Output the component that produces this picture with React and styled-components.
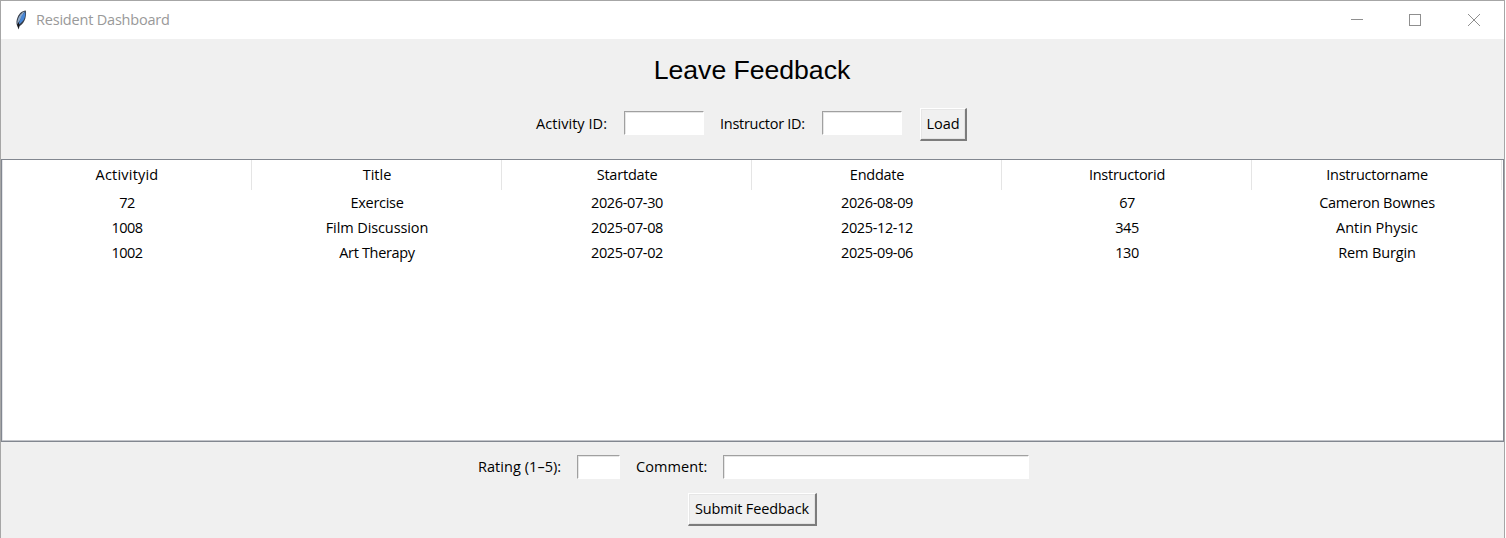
import React from "react";
import styled, { createGlobalStyle } from "styled-components";

const Global = createGlobalStyle`
  * { box-sizing: border-box; }
  html, body { margin: 0; background: #fff; overflow: hidden; }
  body { font-family: "Open Sans", "Noto Sans", sans-serif; font-size: 14.5px; color: #000; }
`;

const Window = styled.div`
  width: 1505px;
  height: 538px;
  border: 1px solid #a6a6a6;
  border-bottom: 0;
  background: #f0f0f0;
  display: flex;
  flex-direction: column;
`;

const TitleBar = styled.header`
  height: 38px;
  flex: none;
  background: #fff;
  display: flex;
  align-items: center;
  padding-left: 12px;
`;

const Feather = styled.svg`
  width: 16px;
  height: 20px;
  flex: none;
`;

const WindowTitle = styled.span`
  margin-left: 7px;
  flex: 1;
  color: #999;
  font-size: 14.5px;
  letter-spacing: -0.2px;
  line-height: 20px;
  white-space: nowrap;
`;

const WindowControls = styled.div`
  display: flex;
  margin-right: -1px;
`;

const ControlIcon = styled.svg`
  width: 58px;
  height: 38px;
  stroke: #8f8f8f;
  fill: none;
  stroke-width: 1;
`;

const Heading = styled.h1`
  margin: 14px 1px 0 0;
  text-align: center;
  font: 400 26.67px/34px "Liberation Sans", Arial, sans-serif;
  letter-spacing: -0.05px;
`;

const FormRow = styled.div`
  display: flex;
  align-items: center;
  flex: none;
  height: ${(p) => p.$height}px;
  margin-top: ${(p) => p.$top}px;
  padding-left: ${(p) => p.$left}px;
`;

const Label = styled.label`
  width: ${(p) => p.$width}px;
  margin-bottom: ${(p) => p.$lift || 0}px;
  line-height: 20px;
  white-space: nowrap;
  letter-spacing: ${(p) => p.$tracking}px;
`;

const Field = styled.input`
  width: ${(p) => p.$width}px;
  height: 24px;
  margin: 0 ${(p) => p.$gap}px ${(p) => p.$lift || 0}px 0;
  padding: 0 3px;
  border: 1px solid;
  border-color: #a0a0a0 #fff #fff #a0a0a0;
  border-radius: 0;
  background: #fff;
  box-shadow: inset 1px 1px #e6e6e6;
  outline: none;
  font: inherit;
`;

const Button = styled.button`
  width: ${(p) => p.$width}px;
  height: 33px;
  padding: 0;
  border: solid;
  border-width: 1px 2px 2px 1px;
  border-color: #fff #7c7c7c #7c7c7c #fff;
  border-radius: 0;
  background: #f0f0f0;
  box-shadow: inset 1px 1px #e6e6e6, inset -1px -1px #e3e3e3;
  color: #000;
  font: inherit;
  line-height: 20px;
  white-space: nowrap;
  letter-spacing: ${(p) => p.$tracking}px;
`;

const TableFrame = styled.section`
  height: 283px;
  flex: none;
  margin-top: 18px;
  border: 1px solid #828790;
  box-shadow: inset 0 -1px #c3c5ca, inset 1px 0 #e3e4e8;
  background: #fff;
`;

const HeaderRow = styled.div`
  display: grid;
  grid-template-columns: repeat(6, 250px);
  height: 30px;
`;

const HeaderCell = styled.div`
  border-right: 1px solid #e5e5e5;
  padding-left: 1px;
  text-align: center;
  line-height: 30px;
  letter-spacing: ${(p) => p.$tracking}px;
`;

const DataRow = styled.div`
  display: grid;
  grid-template-columns: repeat(6, 250px);
  height: 25px;
`;

const DataCell = styled.div`
  text-align: center;
  line-height: 25px;
  white-space: nowrap;
  letter-spacing: ${(p) => p.$tracking}px;
`;

const columns = [
  ["Activityid", 0.2],
  ["Title", 0],
  ["Startdate", -0.2],
  ["Enddate", -0.25],
  ["Instructorid", -0.25],
  ["Instructorname", -0.25],
];

const rows = [
  [["72", -0.5], ["Exercise", -0.29], ["2026-07-30", -0.36], ["2026-08-09", -0.36], ["67", -0.5], ["Cameron Bownes", -0.27]],
  [["1008", -0.5], ["Film Discussion", -0.1], ["2025-07-08", -0.36], ["2025-12-12", -0.36], ["345", -0.5], ["Antin Physic", 0]],
  [["1002", -0.5], ["Art Therapy", -0.33], ["2025-07-02", -0.36], ["2025-09-06", -0.36], ["130", -0.5], ["Rem Burgin", -0.12]],
];

export default function App() {
  return (
    <>
      <Global />
      <Window>
        <TitleBar>
          <Feather viewBox="0 0 16 20">
            <path d="M12.7.5C9 .8 6.200 3.500 4.600 7.200 3.300 10.200 3.200 13 4 15.600L5.700 19.500 6.500 16.300C9.300 14.600 11.300 11.800 12.400 8.200 13 5.500 13.400 2.300 12.700.5Z" fill="#343a45" />
            <path d="M11.600 1.300C8.600 2.400 6.400 5.400 5.100 8.700 4.400 10.700 4.100 12.500 4.500 14.300L8.300 8Z" fill="#8fa9c8" />
            <path d="M12.200 1.500 8.500 6 5.500 14.500C8.600 13.200 10.700 10.400 11.700 7.500 12.300 5 12.500 3 12.200 1.500Z" fill="#4686d6" />
            <path d="M5.800 12 4.400 14.500 5.700 19 6.300 15.500Z" fill="#15171b" />
          </Feather>
          <WindowTitle>Resident Dashboard</WindowTitle>
          <WindowControls>
            <ControlIcon viewBox="0 0 58 38"><path d="M20 18.500H32" /></ControlIcon>
            <ControlIcon viewBox="0 0 58 38"><rect x="20.500" y="13.500" width="11" height="11" /></ControlIcon>
            <ControlIcon viewBox="0 0 58 38"><path d="M21 13 33 25M33 13 21 25" /></ControlIcon>
          </WindowControls>
        </TitleBar>
        <Heading>Leave Feedback</Heading>
        <FormRow $height={33} $top={21} $left={535}>
          <Label $width={88} $tracking={0.05} $lift={2}>Activity ID:</Label>
          <Field $width={80} $gap={16} $lift={3} />
          <Label $width={102} $tracking={-0.28} $lift={2}>Instructor ID:</Label>
          <Field $width={80} $gap={18} $lift={3} />
          <Button $width={47} $tracking={-0.1}>Load</Button>
        </FormRow>
        <TableFrame>
          <HeaderRow>
            {columns.map(([name, tracking]) => <HeaderCell key={name} $tracking={tracking}>{name}</HeaderCell>)}
          </HeaderRow>
          {rows.map((row) => (
            <DataRow key={row[0][0]}>
              {row.map(([value, tracking], i) => <DataCell key={i} $tracking={tracking}>{value}</DataCell>)}
            </DataRow>
          ))}
        </TableFrame>
        <FormRow $height={24} $top={13} $left={477}>
          <Label $width={99} $tracking={0.05}>Rating (1–5):</Label>
          <Field $width={43} $gap={16} />
          <Label $width={87} $tracking={0.1}>Comment:</Label>
          <Field $width={306} $gap={0} />
        </FormRow>
        <FormRow $height={33} $top={14} $left={687}>
          <Button $width={129} $tracking={-0.13}>Submit Feedback</Button>
        </FormRow>
      </Window>
    </>
  );
}
